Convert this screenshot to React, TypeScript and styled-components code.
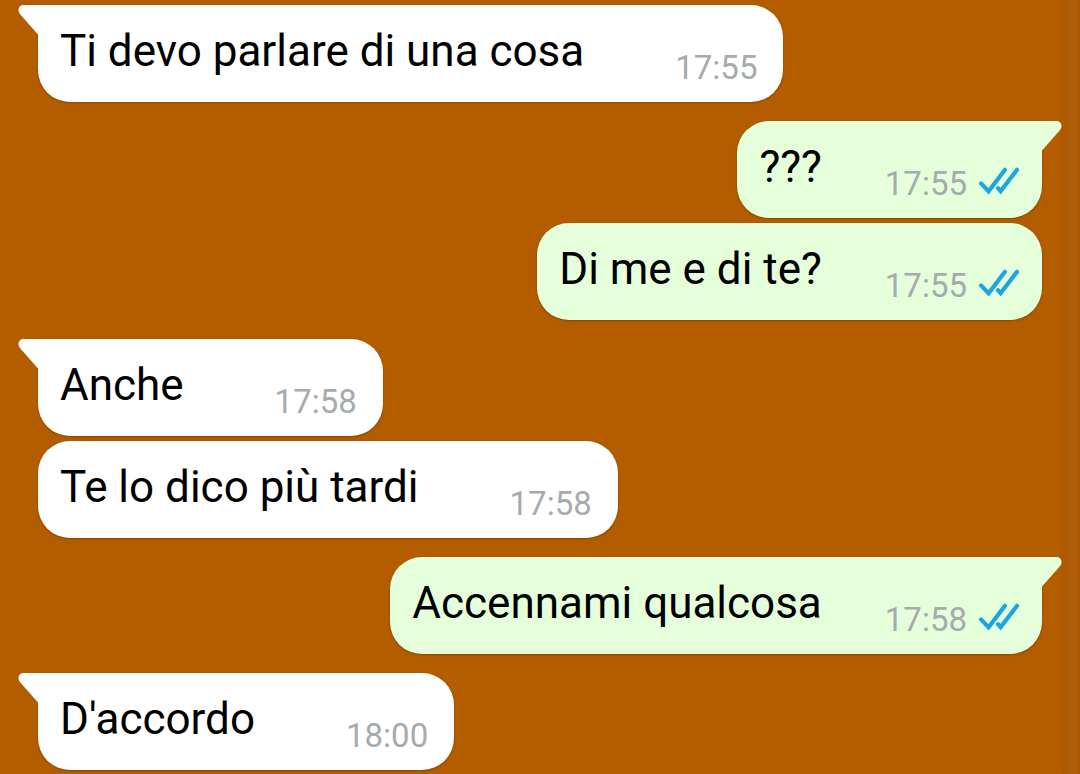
import React from "react";
import styled, { createGlobalStyle } from "styled-components";

const GlobalStyle = createGlobalStyle`
  *, *::before, *::after { box-sizing: border-box; }
  body {
    margin: 0;
    background: #b35c00;
    font-family: Roboto, "Noto Sans", sans-serif;
  }
`;

type Side = "received" | "sent";

interface Message {
  side: Side;
  text: string;
  time: string;
}

const messages: Message[] = [
  { side: "received", text: "Ti devo parlare di una cosa", time: "17:55" },
  { side: "sent", text: "???", time: "17:55" },
  { side: "sent", text: "Di me e di te?", time: "17:55" },
  { side: "received", text: "Anche", time: "17:58" },
  { side: "received", text: "Te lo dico più tardi", time: "17:58" },
  { side: "sent", text: "Accennami qualcosa", time: "17:58" },
  { side: "received", text: "D'accordo", time: "18:00" },
];

const Conversation = styled.main`
  min-height: 100vh;
  background: linear-gradient(to left, #a95703 0, #b15e0a 5px, #b15e0a 10px, #ae5900 16px, #b35c00 20px);
`;

const MessageList = styled.ol`
  display: flex;
  flex-direction: column;
  list-style: none;
  margin: 0;
  padding: 5px 38px 4px;
`;

const MessageRow = styled.li<{ $side: Side; $opensGroup: boolean; $first: boolean }>`
  display: flex;
  justify-content: ${(p) => (p.$side === "sent" ? "flex-end" : "flex-start")};
  margin-top: ${(p) => (p.$first ? "0" : p.$opensGroup ? "19px" : "5px")};
`;

const Bubble = styled.article<{ $side: Side; $opensGroup: boolean }>`
  position: relative;
  display: flex;
  align-items: flex-end;
  gap: ${(p) => (p.$side === "sent" ? "63px" : "91px")};
  padding: 20px ${(p) => (p.$side === "sent" ? "22px" : "26px")} 14px 22px;
  border-radius: 32px;
  border-top-left-radius: ${(p) => (p.$opensGroup && p.$side === "received" ? "0" : "32px")};
  border-top-right-radius: ${(p) => (p.$opensGroup && p.$side === "sent" ? "0" : "32px")};
  background: ${(p) => (p.$side === "sent" ? "#e5ffdb" : "#ffffff")};
  box-shadow: 0 1px 2px rgba(60, 40, 0, 0.4);
`;

const Tail = styled.svg<{ $side: Side }>`
  position: absolute;
  top: 0;
  ${(p) => (p.$side === "sent" ? "right: -20px; transform: scaleX(-1);" : "left: -20px;")}
  width: 21px;
  height: 31px;
`;

const MessageText = styled.p`
  margin: 0;
  padding-bottom: 11px;
  color: #000000;
  font-size: 44px;
  line-height: 52px;
`;

const Meta = styled.div`
  display: flex;
  align-items: center;
  gap: 11px;
`;

const Time = styled.time`
  color: #a6abad;
  font-size: 33px;
  line-height: 40px;
`;

const Ticks = styled.svg`
  width: 42px;
  height: 30px;
  margin-bottom: 6px;
`;

function BubbleTail({ side }: { side: Side }) {
  return (
    <Tail $side={side} viewBox="0 0 21 31" aria-hidden="true">
      <path
        d="M21 0H5.500C2.600 0 .5 2.200 .5 5C.5 7 1.500 8.500 3 10.200L20 29.500H21Z"
        fill={side === "sent" ? "#e5ffdb" : "#ffffff"}
      />
    </Tail>
  );
}

function ReadTicks() {
  return (
    <Ticks
      viewBox="0 0 42 30"
      fill="none"
      stroke="#1ba5e1"
      strokeWidth="4.200"
      strokeLinecap="round"
      role="img"
      aria-label="Letto"
    >
      <path d="M3 17.400L10.600 25.200L27 3.800" />
      <path d="M20 22.200L22.600 25.200L39 3.800" />
    </Ticks>
  );
}

export default function App() {
  return (
    <>
      <GlobalStyle />
      <Conversation>
        <MessageList>
          {messages.map((message, index) => {
            const opensGroup = index === 0 || messages[index - 1].side !== message.side;
            return (
              <MessageRow key={index} $side={message.side} $opensGroup={opensGroup} $first={index === 0}>
                <Bubble $side={message.side} $opensGroup={opensGroup}>
                  {opensGroup && <BubbleTail side={message.side} />}
                  <MessageText>{message.text}</MessageText>
                  <Meta>
                    <Time dateTime={message.time}>{message.time}</Time>
                    {message.side === "sent" && <ReadTicks />}
                  </Meta>
                </Bubble>
              </MessageRow>
            );
          })}
        </MessageList>
      </Conversation>
    </>
  );
}
